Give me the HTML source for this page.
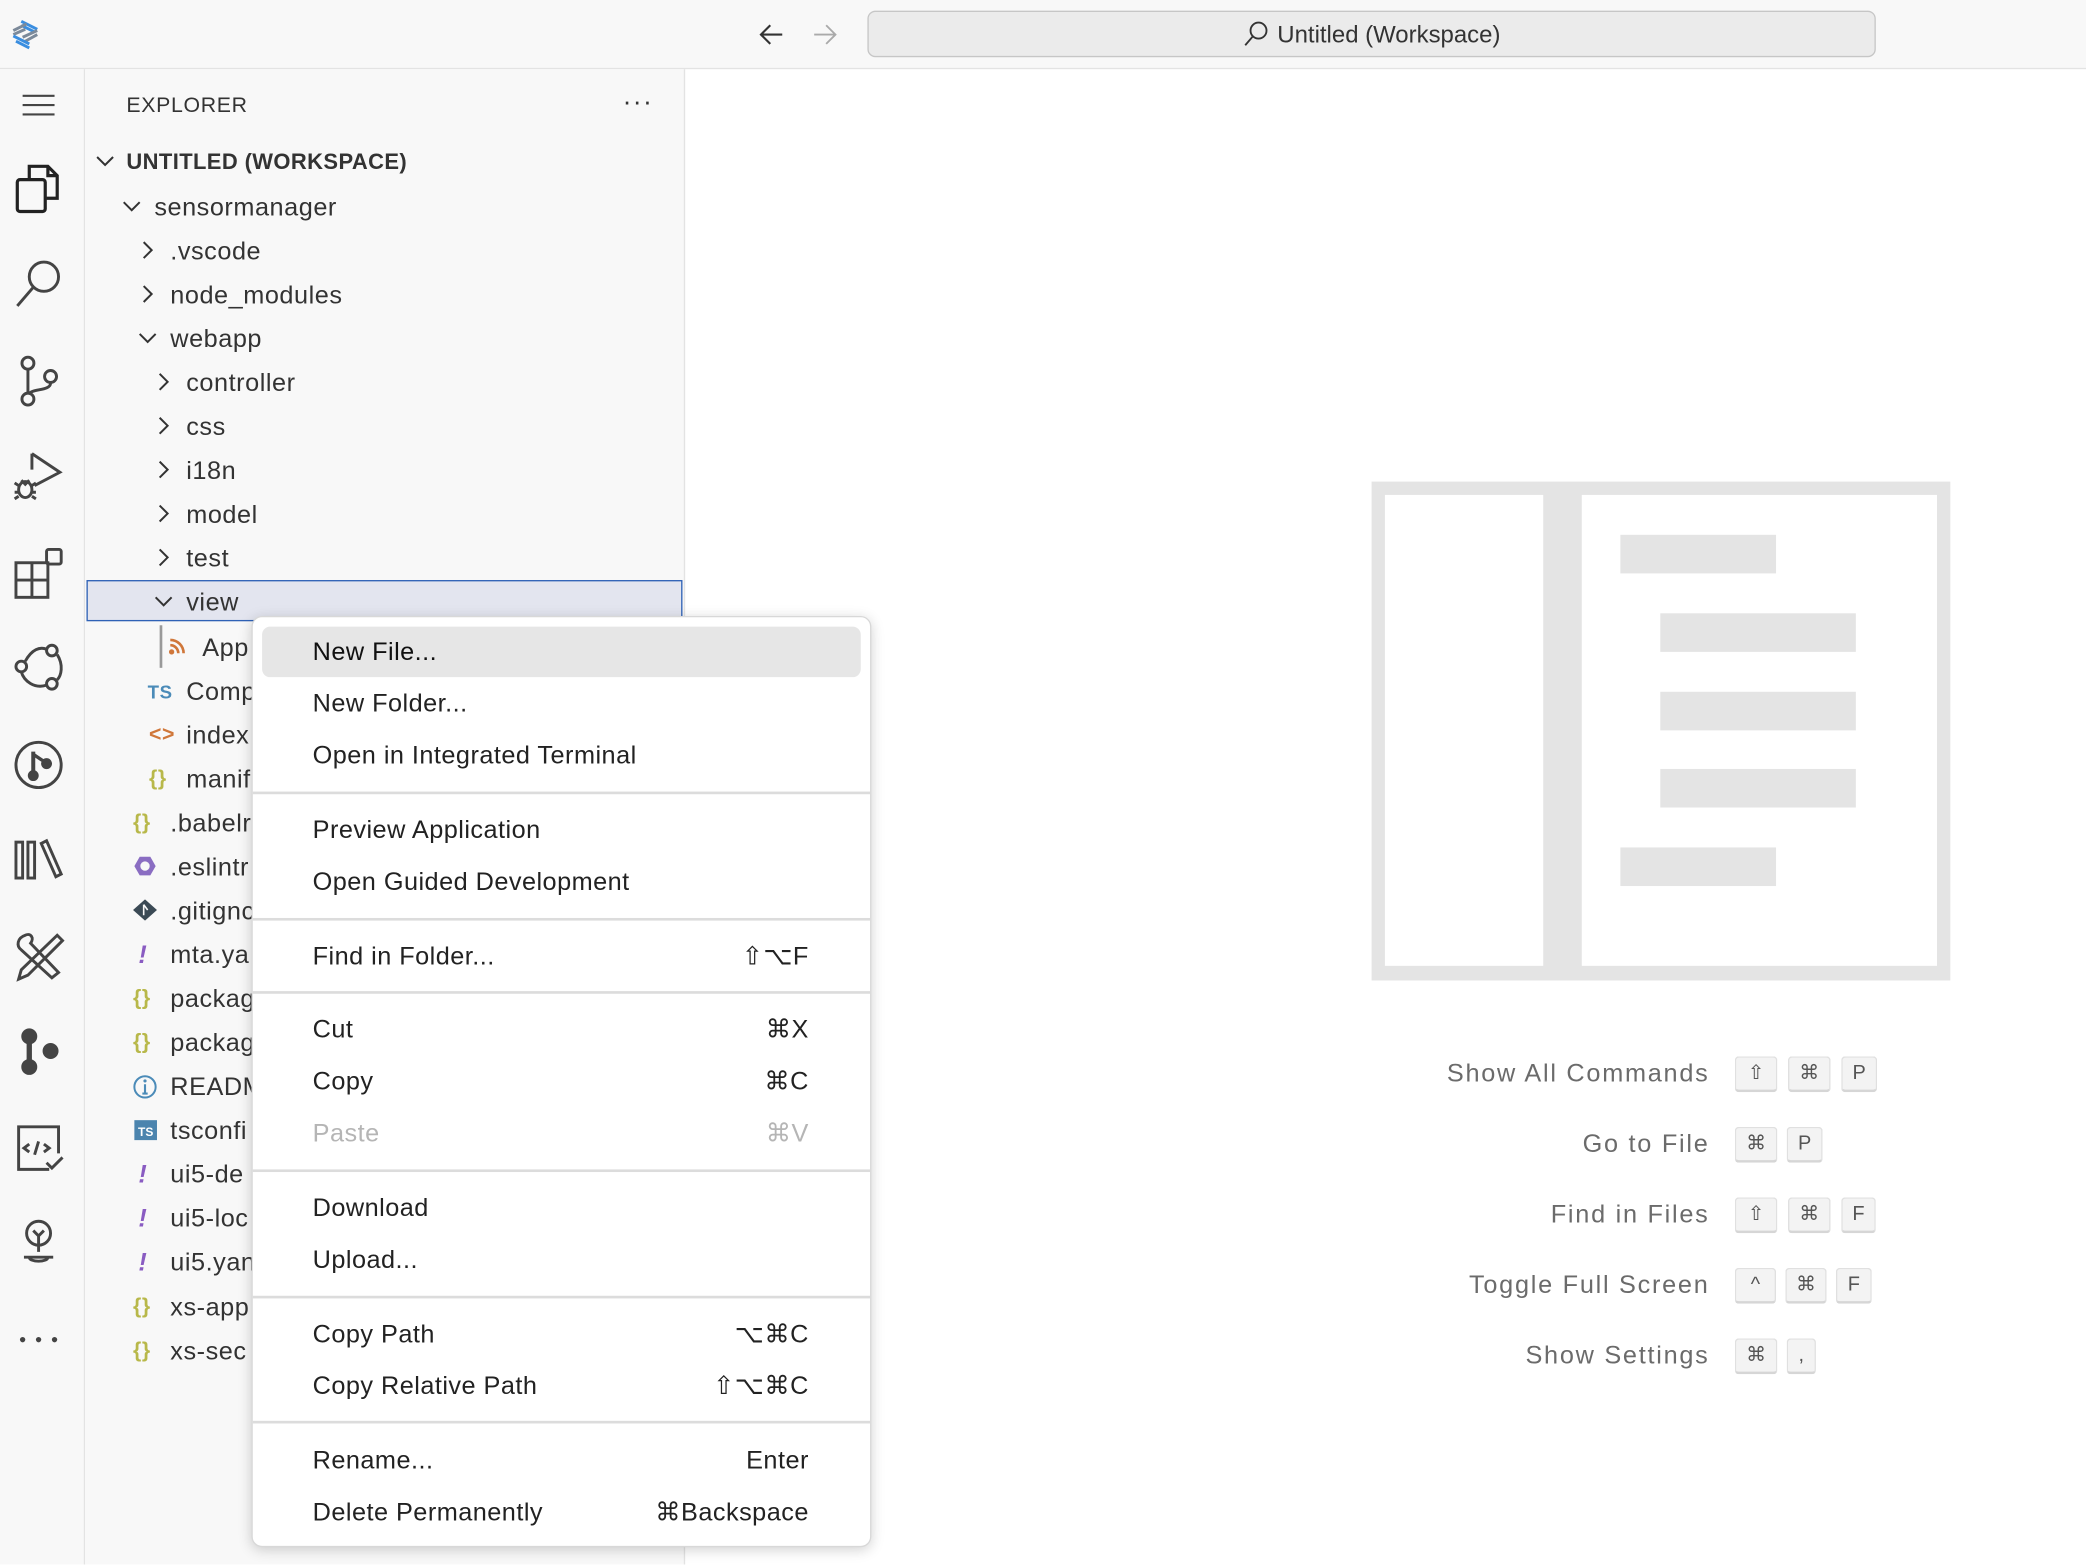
<!DOCTYPE html>
<html><head><meta charset="utf-8">
<style>
html,body{margin:0;padding:0;width:2086px;height:1564px;overflow:hidden;background:#fff}
#w{position:absolute;left:0;top:0;width:1568px;height:1176px;transform:scale(1.33036);transform-origin:0 0;font-family:"Liberation Sans","DejaVu Sans",sans-serif;color:#333}
.abs{position:absolute}
#title{left:0;top:0;width:1568px;height:51px;background:#f8f8f8;border-bottom:1.5px solid #e3e3e3}
#search{left:652px;top:8px;width:756px;height:33px;background:#ebebeb;border:1.5px solid #c6c6c6;border-radius:6px;font-size:18px;text-align:center;line-height:34px;color:#333}
#act{left:0;top:52px;width:63px;height:1124px;background:#f8f8f8;border-right:1.5px solid #e3e3e3}
#side{left:64px;top:52px;width:450px;height:1124px;background:#f8f8f8;border-right:1.5px solid #e3e3e3}
.row{position:absolute;height:33px;line-height:33px;font-size:19px;color:#333;white-space:nowrap;letter-spacing:.4px;margin-top:1px}
.chev{position:absolute}
#menu{left:189px;top:463px;width:464px;height:698px;background:#fff;border:1px solid #d8d8d8;border-radius:8px;box-shadow:0 2px 10px rgba(0,0,0,.18)}
.mi{position:absolute;left:0;width:464px;height:39px;line-height:39px;font-size:19px;color:#222;letter-spacing:.35px;margin-top:1px}
.mi span.l{position:absolute;left:45px}
.mi span.r{position:absolute;right:46px}
.sep{position:absolute;left:0;width:464px;height:2px;background:#dcdcdc}
.lab{position:absolute;right:283px;font-size:19px;color:#6b6b6b;letter-spacing:1.3px;text-align:right;white-space:nowrap;margin-top:2px}
.key{position:absolute;height:24px;line-height:24px;background:#f3f3f3;border:1px solid #e0e0e0;border-bottom:2px solid #d6d6d6;border-radius:3px;font-size:15px;color:#555;text-align:center}
.ic{position:absolute}
</style></head><body><div id="w">

<div id="title" class="abs"></div>
<svg class="abs" style="left:6px;top:12px" width="28" height="26" viewBox="0 0 28 26">
 <g stroke-width="2.2" fill="none">
  <path d="M10 4 L22 10" stroke="#3a8ee0"/><path d="M10 7 L20 12" stroke="#3a8ee0"/>
  <path d="M4 11 L14 6" stroke="#7c8a9a"/><path d="M4 14 L13 10" stroke="#7c8a9a"/>
  <path d="M11 16 L22 11" stroke="#7c8a9a"/><path d="M13 19 L22 14" stroke="#7c8a9a"/>
  <path d="M4 15 L16 21" stroke="#3a8ee0"/><path d="M6 19 L16 24" stroke="#3a8ee0"/>
 </g></svg>
<svg class="abs" style="left:570px;top:17px" width="20" height="18" viewBox="0 0 20 18"><path d="M18 9 H3 M9 2 L2 9 L9 16" stroke="#333" stroke-width="1.6" fill="none"/></svg>
<svg class="abs" style="left:610px;top:17px" width="20" height="18" viewBox="0 0 20 18"><path d="M2 9 H17 M11 2 L18 9 L11 16" stroke="#aaa" stroke-width="1.4" fill="none"/></svg>
<div id="search" class="abs"><svg style="vertical-align:-3px;margin-right:6px" width="20" height="20" viewBox="0 0 20 20"><circle cx="12" cy="8" r="6" stroke="#333" stroke-width="1.4" fill="none"/><path d="M8 12 L2 19" stroke="#333" stroke-width="1.4"/></svg>Untitled (Workspace)</div>

<div id="act" class="abs"></div>
<svg class="ic" style="left:16px;top:70px" width="26" height="18"><path d="M1 2H25M1 9H25M1 16H25" stroke="#444" stroke-width="1.6"/></svg>
<svg class="ic" style="left:10px;top:122px" width="36" height="40" viewBox="0 0 36 40" fill="none" stroke="#222" stroke-width="2.4"><path d="M12 12 V3 H26 L33 10 V27 H25"/><rect x="3" y="13" width="21" height="24" rx="2"/><path d="M26 3 V10 H33"/></svg>
<svg class="ic" style="left:10px;top:194px" width="38" height="40" viewBox="0 0 38 40" fill="none" stroke="#444" stroke-width="2.2"><circle cx="23" cy="14" r="11"/><path d="M15 22 L3 36"/></svg>
<svg class="ic" style="left:12px;top:266px" width="34" height="40" viewBox="0 0 34 40" fill="none" stroke="#444" stroke-width="2.2"><circle cx="9" cy="7" r="4.5"/><circle cx="9" cy="34" r="4.5"/><circle cx="26" cy="17" r="4.5"/><path d="M9 12 V29 M26 22 C26 28 12 26 10 30"/></svg>
<svg class="ic" style="left:8px;top:337px" width="40" height="42" viewBox="0 0 40 42" fill="none" stroke="#444" stroke-width="2.2"><path d="M16 4 L37 18 L18 28"/><path d="M16 4 V16"/><ellipse cx="11" cy="31" rx="5" ry="6"/><path d="M3 26 L6 28 M3 33 H6 M3 38 L6 36 M19 26 L16 28 M19 33 H16 M19 38 L16 36 M8 24 L11 27 L14 24"/></svg>
<svg class="ic" style="left:10px;top:411px" width="38" height="40" viewBox="0 0 38 40" fill="none" stroke="#444" stroke-width="2.2"><rect x="2" y="12" width="24" height="26"/><path d="M2 25 H26 M14 12 V38"/><rect x="25" y="2" width="11" height="11" rx="1.5"/></svg>
<svg class="ic" style="left:8px;top:482px" width="42" height="40" viewBox="0 0 42 40" fill="none" stroke="#444" stroke-width="2.2"><circle cx="8" cy="19" r="4"/><circle cx="31" cy="7" r="4"/><circle cx="31" cy="32" r="4"/><path d="M11 15 C16 6 22 4 27 6 M35 10 C40 18 38 26 35 29 M27 33 C18 36 10 30 8 23"/></svg>
<svg class="ic" style="left:9px;top:555px" width="40" height="40" viewBox="0 0 40 40" fill="none" stroke="#444" stroke-width="2.2"><circle cx="20" cy="20" r="17"/><path d="M16 10 V28" stroke-width="3"/><circle cx="16" cy="28" r="3" fill="#444"/><circle cx="26" cy="19" r="3" fill="#444"/><path d="M16 12 L25 18" stroke-width="2.5"/></svg>
<svg class="ic" style="left:9px;top:628px" width="40" height="36" viewBox="0 0 40 36" fill="none" stroke="#444" stroke-width="2.2"><rect x="3" y="5" width="5" height="27"/><rect x="12" y="5" width="5" height="27"/><path d="M22 6 L26 4 L37 29 L33 31 Z"/></svg>
<svg class="ic" style="left:9px;top:699px" width="40" height="40" viewBox="0 0 40 40" fill="none" stroke="#444" stroke-width="2.2"><path d="M10 4 C4 6 3 12 7 15 L30 36 L35 32 L14 10 C17 6 14 2 10 4 Z"/><path d="M34 4 L38 8 L12 34 L5 37 L7 30 Z"/></svg>
<svg class="ic" style="left:12px;top:770px" width="36" height="40" viewBox="0 0 36 40"><circle cx="10" cy="9" r="6" fill="#444"/><circle cx="10" cy="32" r="6" fill="#444"/><circle cx="26" cy="20" r="6" fill="#444"/><path d="M8 10 L12 10 L12 32 L8 32 Z" fill="#444"/></svg>
<svg class="ic" style="left:10px;top:843px" width="40" height="40" viewBox="0 0 40 40" fill="none" stroke="#444" stroke-width="2.2"><path d="M27 36 H4 V4 H34 V24"/><path d="M12 17 L8 20 L12 23 M23 17 L27 20 L23 23 M19 15 L16 25"/><path d="M25 31 L29 35 L37 27"/></svg>
<svg class="ic" style="left:14px;top:915px" width="30" height="38" viewBox="0 0 30 38" fill="none" stroke="#444" stroke-width="2.2"><circle cx="15" cy="12" r="9"/><path d="M11 10 L15 14 L19 10 M15 14 V26"/><path d="M4 30 H26 M8 30 C8 34 22 34 22 30"/></svg>
<svg class="ic" style="left:14px;top:1002px" width="32" height="10"><circle cx="3" cy="5" r="2" fill="#444"/><circle cx="15" cy="5" r="2" fill="#444"/><circle cx="27" cy="5" r="2" fill="#444"/></svg>

<div id="side" class="abs"></div>
<div class="row" style="left:95px;top:62px;font-size:16px;letter-spacing:.5px">EXPLORER</div>
<div class="row" style="left:468px;top:60px;font-size:20px;letter-spacing:1px">···</div>

<div class="abs" style="left:65px;top:436px;width:446px;height:29px;background:#e3e5ef;border:1.5px solid #2f62b6"></div>
<div class="abs" style="left:120px;top:470px;width:1.5px;height:32px;background:#999"></div>

<svg width="0" height="0" style="position:absolute"><defs>
<path id="cd" d="M1 1 L7 7 L13 1" fill="none" stroke="#333" stroke-width="1.5"/>
<path id="cr" d="M1 1 L7 7 L1 13" fill="none" stroke="#333" stroke-width="1.5"/>
</defs></svg>

<div class="row" style="left:95px;top:105px;font-weight:bold;font-size:16.5px;letter-spacing:.3px">UNTITLED (WORKSPACE)</div>
<svg class="chev" style="left:72px;top:117px" width="15" height="9"><use href="#cd"/></svg>

<svg class="chev" style="left:92px;top:151px" width="15" height="9"><use href="#cd"/></svg>
<div class="row" style="left:116px;top:139px">sensormanager</div>

<svg class="chev" style="left:107px;top:181px" width="9" height="15"><use href="#cr"/></svg>
<div class="row" style="left:128px;top:172px">.vscode</div>
<svg class="chev" style="left:107px;top:214px" width="9" height="15"><use href="#cr"/></svg>
<div class="row" style="left:128px;top:205px">node_modules</div>
<svg class="chev" style="left:104px;top:250px" width="15" height="9"><use href="#cd"/></svg>
<div class="row" style="left:128px;top:238px">webapp</div>

<svg class="chev" style="left:119px;top:280px" width="9" height="15"><use href="#cr"/></svg>
<div class="row" style="left:140px;top:271px">controller</div>
<svg class="chev" style="left:119px;top:313px" width="9" height="15"><use href="#cr"/></svg>
<div class="row" style="left:140px;top:304px">css</div>
<svg class="chev" style="left:119px;top:346px" width="9" height="15"><use href="#cr"/></svg>
<div class="row" style="left:140px;top:337px">i18n</div>
<svg class="chev" style="left:119px;top:379px" width="9" height="15"><use href="#cr"/></svg>
<div class="row" style="left:140px;top:370px">model</div>
<svg class="chev" style="left:119px;top:412px" width="9" height="15"><use href="#cr"/></svg>
<div class="row" style="left:140px;top:403px">test</div>
<svg class="chev" style="left:116px;top:448px" width="15" height="9"><use href="#cd"/></svg>
<div class="row" style="left:140px;top:436px">view</div>

<svg class="ic" style="left:127px;top:479px" width="13" height="13" viewBox="0 0 13 13"><circle cx="2" cy="11" r="2" fill="#d0773a"/><path d="M1 6 A6 6 0 0 1 7 12 M1 2 A10 10 0 0 1 11 12" stroke="#d0773a" stroke-width="2" fill="none"/></svg>
<div class="row" style="left:152px;top:470px">App</div>
<div class="row" style="left:111px;top:503px;font-size:14px;font-weight:bold;color:#4b8bb8">TS</div>
<div class="row" style="left:140px;top:503px">Comp</div>
<div class="row" style="left:112px;top:535px;font-size:16px;color:#d0773a;font-weight:bold">&lt;&gt;</div>
<div class="row" style="left:140px;top:536px">index</div>
<div class="row" style="left:112px;top:568px;font-size:16px;color:#b8b84a;font-weight:bold">{}</div>
<div class="row" style="left:140px;top:569px">manif</div>

<div class="row" style="left:100px;top:601px;font-size:16px;color:#b8b84a;font-weight:bold">{}</div>
<div class="row" style="left:128px;top:602px">.babelr</div>
<svg class="ic" style="left:100px;top:643px" width="18" height="16" viewBox="0 0 18 16"><path d="M5 1 H13 L17 8 L13 15 H5 L1 8 Z" fill="#8a6dc2"/><circle cx="9" cy="8" r="3.5" fill="#f8f8f8"/></svg>
<div class="row" style="left:128px;top:635px">.eslintr</div>
<svg class="ic" style="left:100px;top:676px" width="18" height="16" viewBox="0 0 18 16"><path d="M9 0 L18 8 L9 16 L0 8 Z" fill="#3b4a55"/><path d="M8 4 L11 8 M8 4 V12" stroke="#f8f8f8" stroke-width="1.2"/></svg>
<div class="row" style="left:128px;top:668px">.gitignc</div>
<div class="row" style="left:104px;top:701px;color:#8a5cc2;font-weight:bold;font-style:italic">!</div>
<div class="row" style="left:128px;top:701px">mta.ya</div>
<div class="row" style="left:100px;top:733px;font-size:16px;color:#b8b84a;font-weight:bold">{}</div>
<div class="row" style="left:128px;top:734px">packag</div>
<div class="row" style="left:100px;top:766px;font-size:16px;color:#b8b84a;font-weight:bold">{}</div>
<div class="row" style="left:128px;top:767px">packag</div>
<svg class="ic" style="left:100px;top:808px" width="18" height="18" viewBox="0 0 18 18"><circle cx="9" cy="9" r="8" stroke="#4b8bb8" stroke-width="1.5" fill="none"/><path d="M9 7 V14 M7 14 H11" stroke="#4b8bb8" stroke-width="1.6"/><circle cx="9" cy="4.5" r="1.2" fill="#4b8bb8"/></svg>
<div class="row" style="left:128px;top:800px">READM</div>
<div class="abs" style="left:101px;top:842px;width:17px;height:15px;background:#4b84ae;color:#fff;font-size:9px;font-weight:bold;line-height:19px;text-align:center;font-family:'Liberation Sans',sans-serif">TS</div>
<div class="row" style="left:128px;top:833px">tsconfi</div>
<div class="row" style="left:104px;top:866px;color:#8a5cc2;font-weight:bold;font-style:italic">!</div>
<div class="row" style="left:128px;top:866px">ui5-de</div>
<div class="row" style="left:104px;top:899px;color:#8a5cc2;font-weight:bold;font-style:italic">!</div>
<div class="row" style="left:128px;top:899px">ui5-loc</div>
<div class="row" style="left:104px;top:932px;color:#8a5cc2;font-weight:bold;font-style:italic">!</div>
<div class="row" style="left:128px;top:932px">ui5.yan</div>
<div class="row" style="left:100px;top:965px;font-size:16px;color:#b8b84a;font-weight:bold">{}</div>
<div class="row" style="left:128px;top:966px">xs-app</div>
<div class="row" style="left:100px;top:998px;font-size:16px;color:#b8b84a;font-weight:bold">{}</div>
<div class="row" style="left:128px;top:999px">xs-sec</div>

<div class="abs" style="left:1031px;top:362px;width:435px;height:375px;background:#e4e4e4"></div>
<div class="abs" style="left:1041px;top:372px;width:119px;height:354px;background:#fff"></div>
<div class="abs" style="left:1189px;top:372px;width:267px;height:354px;background:#fff"></div>
<div class="abs" style="left:1218px;top:402px;width:117px;height:29px;background:#e4e4e4"></div>
<div class="abs" style="left:1248px;top:461px;width:147px;height:29px;background:#e4e4e4"></div>
<div class="abs" style="left:1248px;top:520px;width:147px;height:29px;background:#e4e4e4"></div>
<div class="abs" style="left:1248px;top:578px;width:147px;height:29px;background:#e4e4e4"></div>
<div class="abs" style="left:1218px;top:637px;width:117px;height:29px;background:#e4e4e4"></div>

<div class="lab" style="top:795px">Show All Commands</div>
<div class="key" style="left:1304px;top:794px;width:30px">⇧</div><div class="key" style="left:1344px;top:794px;width:30px">⌘</div><div class="key" style="left:1384px;top:794px;width:25px">P</div>
<div class="lab" style="top:848px">Go to File</div>
<div class="key" style="left:1304px;top:847px;width:30px">⌘</div><div class="key" style="left:1343px;top:847px;width:25px">P</div>
<div class="lab" style="top:901px">Find in Files</div>
<div class="key" style="left:1304px;top:900px;width:30px">⇧</div><div class="key" style="left:1344px;top:900px;width:30px">⌘</div><div class="key" style="left:1384px;top:900px;width:24px">F</div>
<div class="lab" style="top:954px">Toggle Full Screen</div>
<div class="key" style="left:1304px;top:953px;width:29px">^</div><div class="key" style="left:1342px;top:953px;width:29px">⌘</div><div class="key" style="left:1380px;top:953px;width:25px">F</div>
<div class="lab" style="top:1007px">Show Settings</div>
<div class="key" style="left:1304px;top:1006px;width:30px">⌘</div><div class="key" style="left:1343px;top:1006px;width:20px">,</div>

<div id="menu" class="abs">
 <div class="abs" style="left:7px;top:7px;width:450px;height:38px;background:#e6e6e6;border-radius:6px"></div>
 <div class="mi" style="top:6px;color:#111"><span class="l">New File...</span></div>
 <div class="mi" style="top:45px"><span class="l">New Folder...</span></div>
 <div class="mi" style="top:84px"><span class="l">Open in Integrated Terminal</span></div>
 <div class="sep" style="top:131px"></div>
 <div class="mi" style="top:140px"><span class="l">Preview Application</span></div>
 <div class="mi" style="top:179px"><span class="l">Open Guided Development</span></div>
 <div class="sep" style="top:226px"></div>
 <div class="mi" style="top:235px"><span class="l">Find in Folder...</span><span class="r">⇧⌥F</span></div>
 <div class="sep" style="top:281px"></div>
 <div class="mi" style="top:290px"><span class="l">Cut</span><span class="r">⌘X</span></div>
 <div class="mi" style="top:329px"><span class="l">Copy</span><span class="r">⌘C</span></div>
 <div class="mi" style="top:368px;color:#b5b5b5"><span class="l">Paste</span><span class="r">⌘V</span></div>
 <div class="sep" style="top:415px"></div>
 <div class="mi" style="top:424px"><span class="l">Download</span></div>
 <div class="mi" style="top:463px"><span class="l">Upload...</span></div>
 <div class="sep" style="top:510px"></div>
 <div class="mi" style="top:519px"><span class="l">Copy Path</span><span class="r">⌥⌘C</span></div>
 <div class="mi" style="top:558px"><span class="l">Copy Relative Path</span><span class="r">⇧⌥⌘C</span></div>
 <div class="sep" style="top:604px"></div>
 <div class="mi" style="top:614px"><span class="l">Rename...</span><span class="r">Enter</span></div>
 <div class="mi" style="top:653px"><span class="l">Delete Permanently</span><span class="r">⌘Backspace</span></div>
</div>

</div></body></html>
